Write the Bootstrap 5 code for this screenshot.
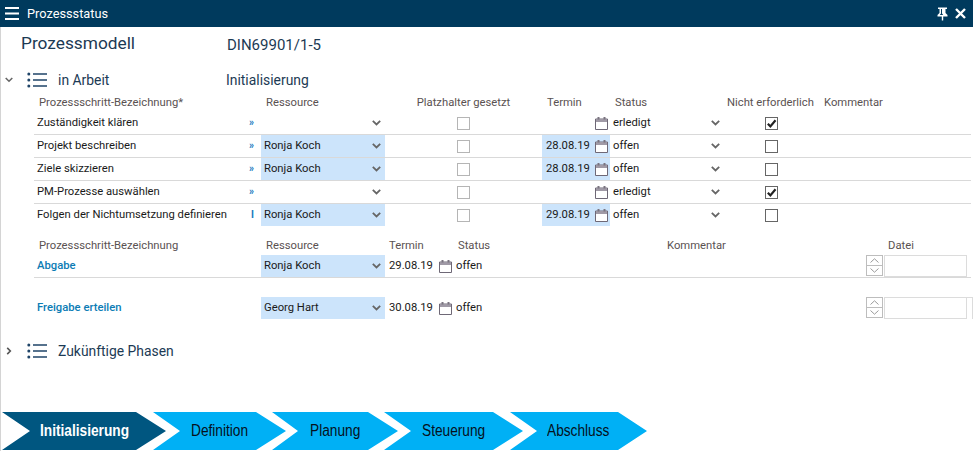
<!DOCTYPE html>
<html lang="de">
<head>
<meta charset="utf-8">
<title>Prozessstatus</title>
<link href="https://cdn.jsdelivr.net/npm/bootstrap@5.3.0/dist/css/bootstrap.min.css" rel="stylesheet">
<style>
html,body{height:451px;overflow:hidden;background:#fff}
body{font-family:Roboto,sans-serif;font-size:11.25px;color:#1a1a1a;line-height:1.2}
.shell{width:973px;height:451px;border-left:1px solid #d4d4d4;position:relative}
.topbar{height:27px;background:#003a5d;color:#fff;font-size:12.75px;margin-left:-1px;padding:0 7px 0 5px}
.topbar .ttl{margin-left:8px}
.topbar .pin{margin-right:7px}
.headline{height:34px;padding-left:20px;color:#1c3a54}
.headline .lbl{width:206px;font-size:17.3px;padding-bottom:2px}
.headline .val{font-size:15px;padding-top:1px}
.sec{height:20px;color:#1c3a54;font-size:13.9px}
.sec .chev{width:26px;padding-left:4px}
.sec .lst{width:31px}
.sec .nm{width:168px}
.sec1{margin-top:9px}
.grid1,.grid2{display:grid;margin-left:33px;align-items:stretch}
.grid1{grid-template-columns:227px 124px 157px 68px 117px 89px 1fr}
.grid2{grid-template-columns:227px 124px 71px 211px 199px 18px 83px 1fr}
.thead{height:15px;color:#5a5252;align-items:center}
.thead1{margin-top:5px;margin-bottom:2px}
.thead2{margin-top:12px;margin-bottom:2px}
.hp{padding-left:5px}
.hc{text-align:center}
.hr2{padding-left:2px}
.hk{padding-left:8px}
.trow{height:23px;border-bottom:1px solid #d9d9d9;margin-right:2px}
.trow.last{border-bottom:0;height:22px}
.cell{display:flex;align-items:center;min-width:0}
.nmcell{justify-content:space-between;padding:0 7px 0 3px}
.pointer{color:#1578bd;font-weight:700;font-size:10px}
.pick{justify-content:space-between;padding:0 4px 0 3px}
.pick.st{padding-right:7px}
.filled{background:#cce4fb}
.dt{justify-content:space-between;padding:0 2px 0 4px}
.dt2{padding:0 4px 0 4px}
.st2{padding-left:0}
.centered{justify-content:center}
.tick{appearance:none;-webkit-appearance:none;width:13px;height:13px;margin:1px 0 0;border:1px solid #b5b5b5;background:#fff;display:block}
.tick.dark{border-color:#666}
.tick:checked{border-color:#666;background:#fff url("data:image/svg+xml,%3Csvg xmlns='http://www.w3.org/2000/svg' viewBox='0 0 12 12'%3E%3Cpath d='M2 6.2 4.8 9.2 10.4 2.4' fill='none' stroke='%23222' stroke-width='2.4'/%3E%3C/svg%3E") center/11px 11px no-repeat}
.lnk{color:#0c7cb5;font-weight:500}
.spin{display:flex;flex-direction:column;width:17px;height:21px;border:1px solid #bdbdbd}
.spin span{flex:1;display:flex;align-items:center;justify-content:center}
.spin span+span{border-top:1px solid #bdbdbd}
.fld{border:1px solid #dcdcdc;height:22px}
.fld2{border:1px solid #dcdcdc;border-left:0;border-bottom:0;height:22px}
.noln{border-bottom:0;margin-top:19px;height:22px;margin-right:0}
.sec2{margin-top:22px}
.flow{display:flex;margin:51px 0 0 1px;height:38px}
.step{height:38px;display:flex;align-items:center;background:#00b0f5;color:#06101c;font-family:"Liberation Sans",Arial,sans-serif;font-size:16px}
.step span{display:inline-block;transform:scaleX(.856);transform-origin:left center}
.step:first-child{background:#005680;color:#fff;font-weight:700}
.s1{width:164px;padding-left:38px;clip-path:polygon(0 0,134px 0,164px 50%,134px 100%,0 100%,28px 50%)}
.s2{width:133px;margin-left:-13px;padding-left:38px;clip-path:polygon(0 0,103px 0,133px 50%,103px 100%,0 100%,27px 50%)}
.s3{width:126px;margin-left:-14px;padding-left:38px;clip-path:polygon(0 0,96px 0,126px 50%,96px 100%,0 100%,26px 50%)}
.s4{width:139px;margin-left:-14px;padding-left:38px;clip-path:polygon(0 0,109px 0,139px 50%,109px 100%,0 100%,27px 50%)}
.s5{width:137px;margin-left:-13px;padding-left:37px;clip-path:polygon(0 0,108px 0,137px 50%,108px 100%,0 100%,27px 50%)}
</style>
</head>
<body>
<svg width="0" height="0" class="d-block position-absolute" aria-hidden="true">
<symbol id="dn" viewBox="0 0 9 6"><path d="M.8.8 4.5 4.4 8.2.8" fill="none" stroke="#666" stroke-width="1.8"/></symbol>
<symbol id="cal" viewBox="0 0 13 14"><path d="M.5 3h12v10.500H.5z" fill="#fff" stroke="#6e6876"/><path d="M1 3h11v3H1z" fill="#a09aa6"/><path d="M2.500 1h2v2.500h-2zM8.500 1h2v2.500h-2z" fill="#7a7480"/></symbol>
<symbol id="lst" viewBox="0 0 20 16"><g fill="#1f4468"><circle cx="1.800" cy="2" r="1.500"/><circle cx="1.800" cy="8" r="1.500"/><circle cx="1.800" cy="14" r="1.500"/><path d="M6 1.200h14v1.600H6zM6 7.200h14v1.600H6zM6 13.200h14v1.600H6z"/></g></symbol>
<symbol id="up" viewBox="0 0 9 5"><path d="M.5 4.500 4.500.8 8.500 4.500" fill="none" stroke="#9a9a9a"/></symbol>
<symbol id="do" viewBox="0 0 9 5"><path d="M.5.500 4.500 4.200 8.500.5" fill="none" stroke="#9a9a9a"/></symbol>
</svg>
<div class="shell">
  <div class="topbar d-flex align-items-center">
    <svg width="14" height="13" viewBox="0 0 15 13" preserveAspectRatio="none" aria-hidden="true"><path d="M0 0h15v2H0zM0 5.500h15v2H0zM0 11h15v2H0z" fill="#fff"/></svg>
    <span class="ttl flex-grow-1">Prozessstatus</span>
    <svg class="pin" width="11" height="14" viewBox="0 0 11 14" aria-hidden="true"><path d="M1 .5h9v1.500H8.500v4l2 2v1.500H.5V8l2-2V2H1zM4 2v4.500L2.800 8h3.400L5 6.500V2zM4.800 9.500h1.400V13.500H4.800z" fill="#fff" fill-rule="evenodd"/></svg>
    <svg width="11" height="11" viewBox="0 0 11 11" aria-hidden="true"><path d="M1 1l9 9M10 1l-9 9" stroke="#fff" stroke-width="2.400"/></svg>
  </div>
  <div class="headline d-flex align-items-center"><span class="lbl">Prozessmodell</span><span class="val">DIN69901/1-5</span></div>

  <div class="sec sec1 d-flex align-items-center">
    <span class="chev d-flex"><svg width="8" height="6" aria-hidden="true"><use href="#dn"/></svg></span>
    <span class="lst d-flex"><svg width="20" height="16" aria-hidden="true"><use href="#lst"/></svg></span>
    <span class="nm">in Arbeit</span><span>Initialisierung</span>
  </div>

  <div class="grid1 thead thead1"><div class="hp">Prozessschritt-Bezeichnung*</div><div class="hp">Ressource</div><div class="hc">Platzhalter gesetzt</div><div class="hp">Termin</div><div class="hp">Status</div><div class="text-nowrap">Nicht erforderlich</div><div class="hk">Kommentar</div></div>

  <div class="grid1 trow">
    <div class="cell nmcell"><span>Zuständigkeit klären</span><span class="pointer">»</span></div>
    <div class="cell pick justify-content-end"><svg width="9" height="6" aria-hidden="true"><use href="#dn"/></svg></div>
    <div class="cell centered"><input class="tick" type="checkbox" aria-label="Platzhalter"></div>
    <div class="cell dt justify-content-end"><svg width="13" height="14" aria-hidden="true"><use href="#cal"/></svg></div>
    <div class="cell pick st"><span>erledigt</span><svg width="9" height="6" aria-hidden="true"><use href="#dn"/></svg></div>
    <div class="cell centered"><input class="tick dark" type="checkbox" checked aria-label="Nicht erforderlich"></div><div></div>
  </div>
  <div class="grid1 trow">
    <div class="cell nmcell"><span>Projekt beschreiben</span><span class="pointer">»</span></div>
    <div class="cell pick filled"><span>Ronja Koch</span><svg width="9" height="6" aria-hidden="true"><use href="#dn"/></svg></div>
    <div class="cell centered"><input class="tick" type="checkbox" aria-label="Platzhalter"></div>
    <div class="cell dt filled"><span>28.08.19</span><svg width="13" height="14" aria-hidden="true"><use href="#cal"/></svg></div>
    <div class="cell pick st"><span>offen</span><svg width="9" height="6" aria-hidden="true"><use href="#dn"/></svg></div>
    <div class="cell centered"><input class="tick dark" type="checkbox" aria-label="Nicht erforderlich"></div><div></div>
  </div>
  <div class="grid1 trow">
    <div class="cell nmcell"><span>Ziele skizzieren</span><span class="pointer">»</span></div>
    <div class="cell pick filled"><span>Ronja Koch</span><svg width="9" height="6" aria-hidden="true"><use href="#dn"/></svg></div>
    <div class="cell centered"><input class="tick" type="checkbox" aria-label="Platzhalter"></div>
    <div class="cell dt filled"><span>28.08.19</span><svg width="13" height="14" aria-hidden="true"><use href="#cal"/></svg></div>
    <div class="cell pick st"><span>offen</span><svg width="9" height="6" aria-hidden="true"><use href="#dn"/></svg></div>
    <div class="cell centered"><input class="tick dark" type="checkbox" aria-label="Nicht erforderlich"></div><div></div>
  </div>
  <div class="grid1 trow">
    <div class="cell nmcell"><span>PM-Prozesse auswählen</span><span class="pointer">»</span></div>
    <div class="cell pick justify-content-end"><svg width="9" height="6" aria-hidden="true"><use href="#dn"/></svg></div>
    <div class="cell centered"><input class="tick" type="checkbox" aria-label="Platzhalter"></div>
    <div class="cell dt justify-content-end"><svg width="13" height="14" aria-hidden="true"><use href="#cal"/></svg></div>
    <div class="cell pick st"><span>erledigt</span><svg width="9" height="6" aria-hidden="true"><use href="#dn"/></svg></div>
    <div class="cell centered"><input class="tick dark" type="checkbox" checked aria-label="Nicht erforderlich"></div><div></div>
  </div>
  <div class="grid1 trow last">
    <div class="cell nmcell"><span>Folgen der Nichtumsetzung definieren</span><span class="pointer">I</span></div>
    <div class="cell pick filled"><span>Ronja Koch</span><svg width="9" height="6" aria-hidden="true"><use href="#dn"/></svg></div>
    <div class="cell centered"><input class="tick" type="checkbox" aria-label="Platzhalter"></div>
    <div class="cell dt filled"><span>29.08.19</span><svg width="13" height="14" aria-hidden="true"><use href="#cal"/></svg></div>
    <div class="cell pick st"><span>offen</span><svg width="9" height="6" aria-hidden="true"><use href="#dn"/></svg></div>
    <div class="cell centered"><input class="tick dark" type="checkbox" aria-label="Nicht erforderlich"></div><div></div>
  </div>

  <div class="grid2 thead thead2"><div class="hp">Prozessschritt-Bezeichnung</div><div class="hp">Ressource</div><div class="hr2 ps-1">Termin</div><div class="hr2">Status</div><div>Kommentar</div><div></div><div class="ps-1">Datei</div><div></div></div>
  <div class="grid2 trow">
    <div class="cell nmcell lnk"><span>Abgabe</span></div>
    <div class="cell pick filled"><span>Ronja Koch</span><svg width="9" height="6" aria-hidden="true"><use href="#dn"/></svg></div>
    <div class="cell dt dt2"><span>29.08.19</span><svg width="13" height="14" aria-hidden="true"><use href="#cal"/></svg></div>
    <div class="cell st2"><span>offen</span></div><div></div>
    <div class="spin"><span><svg width="9" height="5" aria-hidden="true"><use href="#up"/></svg></span><span><svg width="9" height="5" aria-hidden="true"><use href="#do"/></svg></span></div>
    <div class="fld"></div><div></div>
  </div>
  <div class="grid2 trow noln">
    <div class="cell nmcell lnk"><span>Freigabe erteilen</span></div>
    <div class="cell pick filled"><span>Georg Hart</span><svg width="9" height="6" aria-hidden="true"><use href="#dn"/></svg></div>
    <div class="cell dt dt2"><span>30.08.19</span><svg width="13" height="14" aria-hidden="true"><use href="#cal"/></svg></div>
    <div class="cell st2"><span>offen</span></div><div></div>
    <div class="spin"><span><svg width="9" height="5" aria-hidden="true"><use href="#up"/></svg></span><span><svg width="9" height="5" aria-hidden="true"><use href="#do"/></svg></span></div>
    <div class="fld"></div><div class="fld2"></div>
  </div>

  <div class="sec sec2 d-flex align-items-center">
    <span class="chev d-flex"><svg width="8" height="8" viewBox="0 0 6 9" aria-hidden="true"><path d="M1 1l3.500 3.500L1 8" fill="none" stroke="#555" stroke-width="1.800"/></svg></span>
    <span class="lst d-flex"><svg width="20" height="16" aria-hidden="true"><use href="#lst"/></svg></span>
    <span>Zukünftige Phasen</span>
  </div>

  <div class="flow">
    <div class="step s1"><span>Initialisierung</span></div>
    <div class="step s2"><span>Definition</span></div>
    <div class="step s3"><span>Planung</span></div>
    <div class="step s4"><span>Steuerung</span></div>
    <div class="step s5"><span>Abschluss</span></div>
  </div>
</div>
<script src="https://cdn.jsdelivr.net/npm/bootstrap@5.3.0/dist/js/bootstrap.bundle.min.js"></script>
</body>
</html>
